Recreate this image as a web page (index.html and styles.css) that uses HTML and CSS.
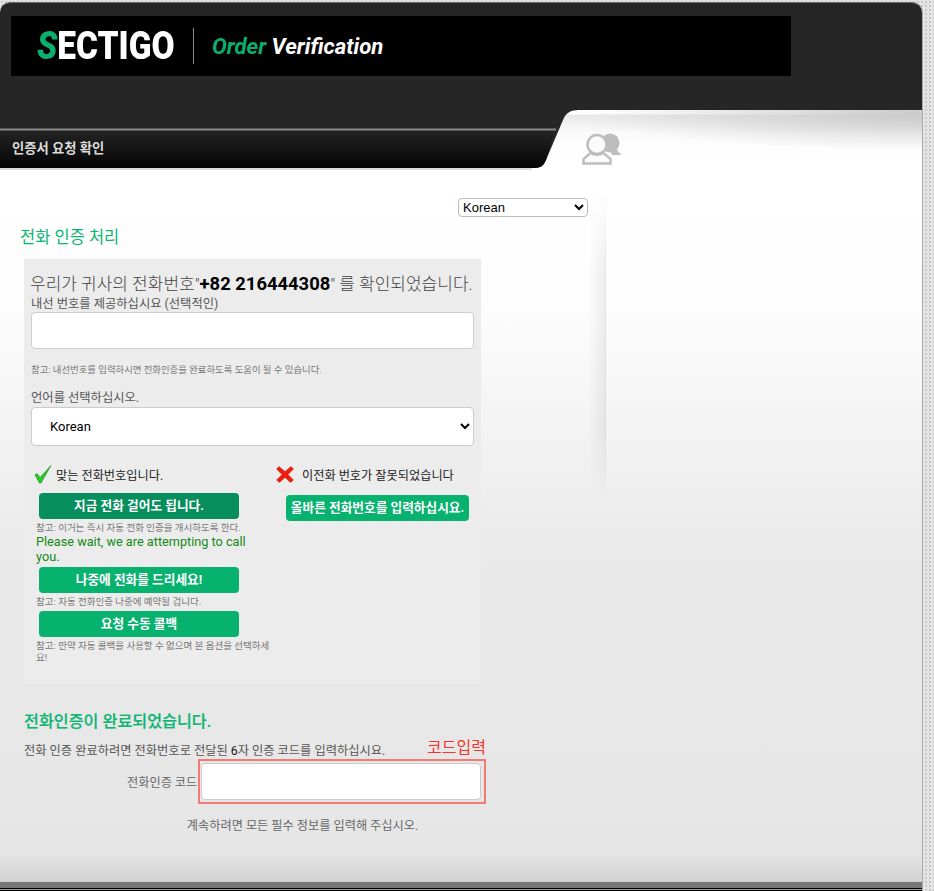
FILE: index.html
```html
<!DOCTYPE html>
<html lang="ko">
<head>
    <meta charset="UTF-8">
    <meta name="viewport" content="width=device-width, initial-scale=1.0">
    <title>Sectigo Order Verification</title>
    <link rel="stylesheet" href="styles.css">
</head>
<body>
    <div class="frame">
        <div class="head">
            <div class="banner">
                <div class="logo"><span class="logo-s">S</span>ECTIGO</div>
                <div class="banner-line"></div>
                <div class="banner-title"><span class="green">Order</span> Verification</div>
            </div>
        </div>

        <div class="tabrow">
            <!-- dark corner with the slanted tab edge -->
            <svg class="tab-shape" width="580" height="60" viewBox="0 0 580 60">
                <defs>
                    <linearGradient id="bar" x1="0" y1="0" x2="0" y2="1">
                        <stop offset="0" stop-color="#242424"/>
                        <stop offset="1" stop-color="#040404"/>
                    </linearGradient>
                </defs>
                <path d="M0 0H579C570 0 566 3 563 10L546 50C543 57 540 58 532 58H0Z" fill="#262626"/>
                <path d="M0 20H555L546 50C543 57 540 58 532 58H0Z" fill="url(#bar)"/>
                <path d="M0 19.5H556" stroke="#8a8a8a" stroke-width="2" fill="none"/>
                <path d="M0 59H532" stroke="#d0d0d0" stroke-width="1.5" fill="none"/>
            </svg>
            <div class="tab-title">인증서 요청 확인</div>
            <svg class="tab-icon" width="42" height="32" viewBox="0 0 42 32">
                <circle cx="28" cy="10" r="9.5" fill="#bdbdbd"/>
                <path d="M28 16L33 15L39.5 22H30Z" fill="#bdbdbd"/>
                <circle cx="15" cy="11.5" r="9.5" fill="#fbfbfb" stroke="#bdbdbd" stroke-width="2.4"/>
                <path d="M1.5 30.5V26L8.5 20Q15 23.5 21.5 20L28.5 26V30.5Z" fill="#fbfbfb" stroke="#bdbdbd" stroke-width="2.4"/>
            </svg>
        </div>

        <div class="content">
            <div class="main">
                <div class="lang-row">
                    <select class="lang-small">
                        <option>Korean</option>
                    </select>
                </div>
                <h2 class="title">전화 인증 처리</h2>

                <div class="panel">
                    <p class="phone-line">우리가 귀사의 전화번호"<b>+82 216444308</b>" 를 확인되었습니다.</p>
                    <label class="label">내선 번호를 제공하십시요 (선택적인)</label>
                    <input class="field" type="text">
                    <p class="note note-ext">참고: 내선번호를 입력하시면 전화인증을 완료하도록 도움이 될 수 있습니다.</p>
                    <label class="label label-lang">언어를 선택하십시오.</label>
                    <select class="lang-big">
                        <option>Korean</option>
                    </select>

                    <div class="choices">
                        <div class="col-yes">
                            <div class="answer">
                                <svg width="18" height="19" viewBox="0 0 18 19">
                                    <path d="M1 10L3 8.5L6 12.5L17 0.5L7 18H5.5Z" fill="#22d322" stroke="#0a6a0a" stroke-width="0.5"/>
                                </svg>
                                <span>맞는 전화번호입니다.</span>
                            </div>
                            <a class="btn btn-active">지금 전화 걸어도 됩니다.</a>
                            <p class="note">참고: 이거는 즉시 자동 전화 인증을 개시하도록 한다.</p>
                            <p class="wait">Please wait, we are attempting to call you.</p>
                            <a class="btn">나중에 전화를 드리세요!</a>
                            <p class="note">참고: 자동 전화인증 나중에 예약될 겁니다.</p>
                            <a class="btn">요청 수동 콜백</a>
                            <p class="note">참고: 만약 자동 콜백을 사용할 수 없으며 본 옵션을 선택하세요!</p>
                        </div>
                        <div class="col-no">
                            <div class="answer answer-no">
                                <svg width="18" height="17" viewBox="0 0 18 17">
                                    <path d="M0.5 3L3 0.5L9 5.5L15 0.5L17.5 3L12 8.5L17.5 14L14.5 16.5L9 11.5L3.5 16.5L0.5 14L6 8.5Z" fill="#f01c0c" stroke="#b01000" stroke-width="0.4"/>
                                </svg>
                                <span>이전화 번호가 잘못되었습니다</span>
                            </div>
                            <a class="btn btn-wide">올바른 전화번호를 입력하십시요.</a>
                        </div>
                    </div>
                </div>

                <h2 class="title title-done">전화인증이 완료되었습니다.</h2>
                <div class="code-head">
                    <p class="code-text">전화 인증 완료하려면 전화번호로 전달된 <span class="dark">6</span>자 인증 코드를 입력하십시요.</p>
                    <span class="code-mark">코드입력</span>
                </div>
                <div class="code-row">
                    <label class="code-label">전화인증 코드</label>
                    <div class="code-box">
                        <input class="field field-code" type="text">
                    </div>
                </div>
                <p class="required">계속하려면 모든 필수 정보를 입력해 주십시오.</p>
            </div>
            <div class="side"></div>
        </div>

        <div class="foot"></div>
    </div>
</body>
</html>
```

FILE: styles.css
```css
* {
    margin: 0;
    padding: 0;
    box-sizing: border-box;
}

html, body {
    height: 891px;
    overflow: hidden;
}

body {
    font-family: Roboto, "Noto Sans CJK KR", sans-serif;
    background-color: #e4e4e4;
    background-image: radial-gradient(#c8c8c8 1px, transparent 1.2px);
    background-size: 4px 4px;
    color: #555;
    padding-top: 2px;
}

.frame {
    width: 923px;
    height: 889px;
    display: flex;
    flex-direction: column;
    border-right: 1px solid #a8a8a8;
    border-radius: 10px 10px 0 0;
    background: linear-gradient(180deg, #fff 170px, #fdfdfd 300px, #e9e9e9 560px, #e6e6e6 850px, #d2d2d2 880px);
}

.head {
    height: 108px;
    padding: 13px 0 0 11px;
    background: #262626;
    border-top: 1px solid #6a6a6a;
    border-radius: 10px 10px 0 0;
}

.banner {
    width: 780px;
    height: 60px;
    background: #000;
    display: flex;
    align-items: center;
    color: #fff;
}

.logo {
    width: 137px;
    margin-left: 26px;
    font-size: 39px;
    font-weight: 900;
    line-height: 44px;
    white-space: nowrap;
    transform: scaleX(0.857);
    transform-origin: left center;
}

.logo-s {
    color: #0cae6e;
    font-style: italic;
}

.banner-line {
    width: 1px;
    height: 36px;
    margin-left: 19px;
    background: #8c8c8c;
}

.banner-title {
    margin-left: 18px;
    font-size: 22.2px;
    font-weight: 700;
    font-style: italic;
    white-space: nowrap;
}

.green {
    color: #0cae6e;
}

.tabrow {
    position: relative;
    height: 60px;
    display: flex;
    align-items: flex-start;
    padding-top: 31px;
    background:
        radial-gradient(ellipse 340px 36px at 100% 4px, #cacaca, transparent),
        linear-gradient(180deg, #fff 4px, #e8e8e8 5px, #fbfbfb 24px, #fff 50px);
}

.tab-shape {
    position: absolute;
    left: 0;
    top: 0;
}

.tab-title {
    position: relative;
    flex: 0 0 582px;
    padding-left: 12px;
    font-size: 13.3px;
    font-weight: 700;
    line-height: 16px;
    color: #ddd;
}

.tab-icon {
    position: relative;
    margin-top: -8px;
}

.content {
    display: flex;
}

.main {
    position: relative;
    width: 606px;
    padding-top: 28px;
}

/* soft shadow down the right side of the main column */
.main::after {
    content: "";
    position: absolute;
    right: 0;
    top: 22px;
    width: 18px;
    height: 310px;
    background: linear-gradient(90deg, transparent, rgba(0, 0, 0, 0.06) 92%, rgba(0, 0, 0, 0.12));
    -webkit-mask-image: linear-gradient(180deg, transparent, #000 25%, #000 75%, transparent);
    mask-image: linear-gradient(180deg, transparent, #000 25%, #000 75%, transparent);
}

.lang-row {
    display: flex;
    justify-content: flex-end;
    padding-right: 18px;
}

.lang-small {
    width: 130px;
    height: 19px;
    font-family: "Liberation Sans", sans-serif;
    font-size: 13px;
    color: #000;
    background: #fff;
    border: 1px solid #bbb;
    border-radius: 4px;
}

.title {
    margin: 11px 0 0 20px;
    font-size: 16.5px;
    font-weight: 400;
    line-height: 20px;
    color: #0cb573;
}

.panel {
    width: 457px;
    height: 425px;
    margin: 11px 0 0 24px;
    padding: 14px 7px 0 7px;
    background: #ececec;
}

.phone-line {
    margin-left: -1px;
    font-size: 17px;
    font-weight: 300;
    line-height: 23px;
    color: #444;
    white-space: nowrap;
}

.phone-line b {
    font-size: 18.4px;
    font-weight: 700;
    line-height: 20px;
    color: #000;
}

.label {
    display: block;
    font-size: 12.3px;
    line-height: 16px;
    color: #555;
}

.field {
    display: block;
    width: 443px;
    height: 37px;
    background: #fff;
    border: 1px solid #ccc;
    border-radius: 4px;
}

.note {
    font-size: 9.5px;
    line-height: 12px;
    color: #777;
}

.note-ext {
    margin-top: 15px;
    font-size: 9.4px;
}

.label-lang {
    margin-top: 14px;
}

.lang-big {
    display: block;
    width: 443px;
    height: 39px;
    margin-top: 1px;
    padding-left: 14px;
    font-family: Roboto, sans-serif;
    font-size: 13px;
    color: #000;
    background: #fff;
    border: 1px solid #ccc;
    border-radius: 4px;
}

.choices {
    display: flex;
    margin-top: 19px;
}

.col-yes {
    width: 240px;
}

.col-no {
    margin-left: 5px;
}

.answer {
    display: flex;
    align-items: center;
    gap: 4px;
    height: 19px;
    padding-left: 3px;
    font-size: 12.2px;
    color: #222;
}

.answer-no {
    gap: 8px;
    padding-left: 0;
}

.btn {
    display: block;
    width: 200px;
    height: 26px;
    margin: 9px 0 1px 8px;
    font-size: 12.7px;
    font-weight: 700;
    line-height: 25px;
    text-align: center;
    color: #fff;
    background: #07b26f;
    border-radius: 4px;
}

.col-yes .note {
    padding: 2px 0 0 5px;
}

.btn-active {
    background: #068f5c;
}

.col-yes .wait + .btn {
    margin-top: 3px;
}

.col-yes .note + .btn {
    margin-top: 3px;
}

.btn-wide {
    width: 183px;
    margin: 11px 0 0 10px;
    white-space: nowrap;
}

.wait {
    padding-left: 5px;
    font-size: 12.7px;
    line-height: 15px;
    color: #148a14;
}

.title-done {
    margin: 28px 0 0 24px;
    font-size: 16.2px;
    font-weight: 500;
    -webkit-text-stroke: 0.2px #0cb573;
}

.code-head {
    display: flex;
    justify-content: space-between;
    align-items: flex-end;
    width: 462px;
    margin: 7px 0 0 24px;
}

.code-text {
    margin-bottom: -2px;
    font-size: 12.25px;
    line-height: 16px;
    color: #555;
}

.dark {
    color: #111;
}

.code-mark {
    font-size: 16px;
    line-height: 18px;
    color: #f4352b;
}

.code-row {
    display: flex;
    align-items: center;
    margin: 2px 0 0 127px;
}

.code-label {
    width: 71px;
    font-size: 12.2px;
    white-space: nowrap;
    color: #666;
}

.code-box {
    width: 288px;
    height: 45px;
    padding: 2px 1px;
    border: 2px solid #f47a75;
}

.field-code {
    width: 280px;
    height: 37px;
}

.required {
    width: 605px;
    margin-top: 14px;
    font-size: 12.2px;
    line-height: 16px;
    text-align: center;
    color: #666;
}

.side {
    flex: 1;
}

.foot {
    margin-top: auto;
    height: 9px;
    background: linear-gradient(180deg, #777 6px, #000 6px, #000 7px, #999 7px, #999 8px, #000 8px);
}
```
